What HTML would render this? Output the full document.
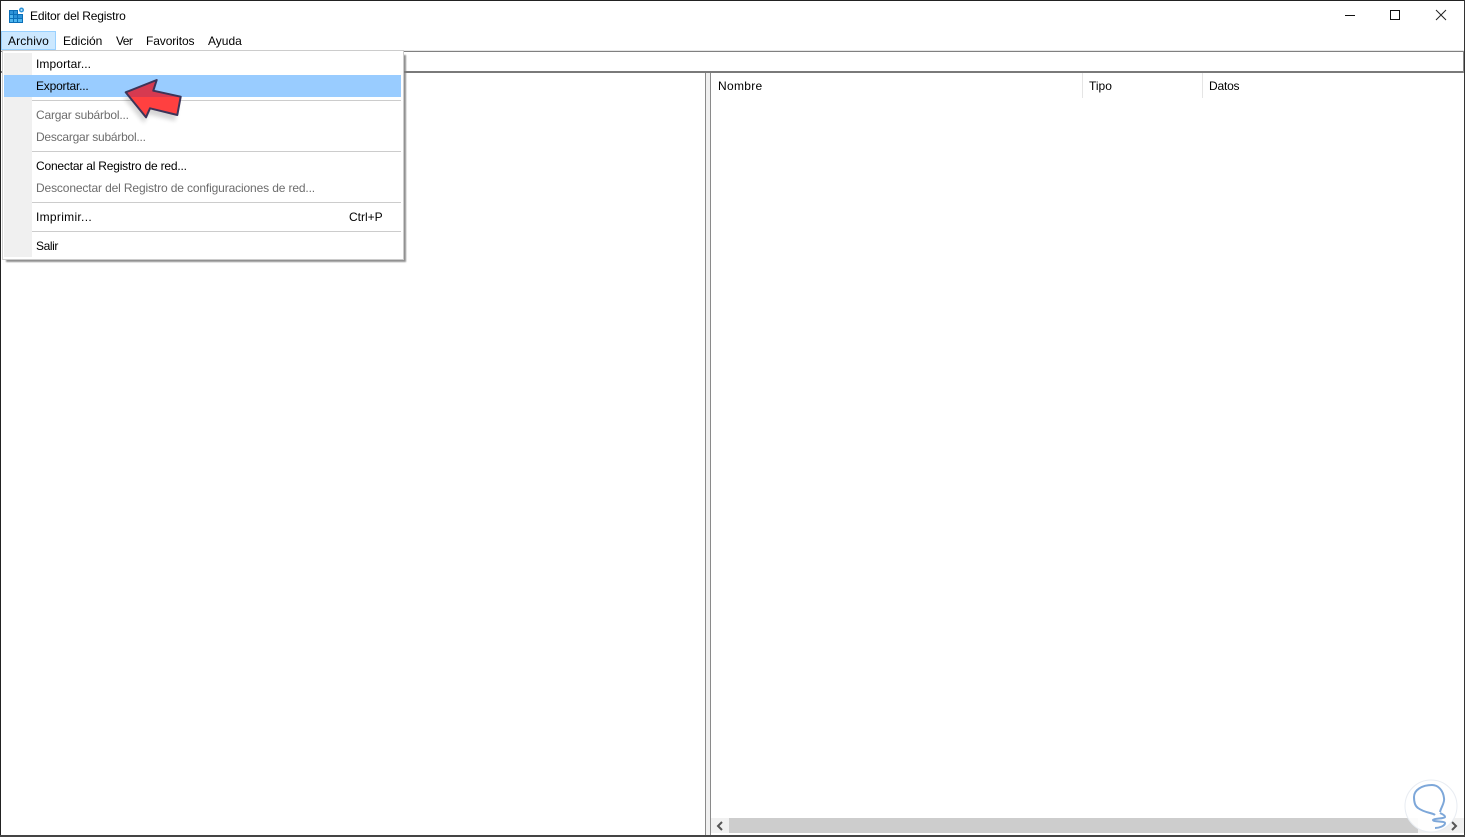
<!DOCTYPE html>
<html><head><meta charset="utf-8"><style>
html,body{margin:0;padding:0;background:#fff;}
#p{position:relative;width:1465px;height:837px;overflow:hidden;background:#fff;font-family:"Liberation Sans",sans-serif;font-size:12px;color:#000;}
.b{position:absolute;}
.t{position:absolute;white-space:nowrap;line-height:16px;height:16px;color:#000;}
.d{color:#6d6d6d;}
</style></head><body><div id="p">
<div class="b" style="left:0;top:0;width:1465px;height:1px;background:#222"></div>
<div class="b" style="left:0;top:0;width:1px;height:837px;background:#222"></div>
<div class="b" style="left:1464px;top:0;width:1px;height:837px;background:#333"></div>
<div class="b" style="left:0;top:835px;width:1465px;height:2px;background:#444"></div>

<svg class="b" style="left:8px;top:7px" width="17" height="17" viewBox="0 0 17 17">
<rect x="1" y="3" width="14" height="13" fill="#0b6fb8"/>
<g fill="#4db5ee"><rect x="2" y="4" width="3" height="3" fill="#2d93d8"/><rect x="6" y="4" width="3" height="3" fill="#2d93d8"/><rect x="2" y="8" width="3" height="3"/><rect x="6" y="8" width="3" height="3" fill="#2d93d8"/><rect x="10" y="8" width="4" height="3" fill="#2d93d8"/><rect x="2" y="12" width="3" height="3"/><rect x="6" y="12" width="3" height="3"/><rect x="10" y="12" width="4" height="3"/></g>
<rect x="10" y="3" width="5" height="4" fill="#fff"/>
<circle cx="13.500" cy="3" r="2.500" fill="#2d93d8"/><circle cx="13.500" cy="3" r="1" fill="#bfe6fa"/>
</svg>
<div class="t" style="left:30px;top:8px;letter-spacing:-.16px">Editor del Registro</div>

<div class="b" style="left:1345px;top:15px;width:10px;height:1px;background:#111"></div>
<div class="b" style="left:1390px;top:10px;width:8px;height:8px;border:1px solid #111"></div>
<svg class="b" style="left:1435px;top:9px" width="12" height="12"><path d="M1 1L11 11M11 1L1 11" stroke="#222" stroke-width="1" fill="none"/></svg>

<div class="b" style="left:1px;top:31px;width:53px;height:17px;background:#cce8ff;border:1px solid #99d1ff"></div>
<div class="t" style="left:8px;top:33px;letter-spacing:.14px">Archivo</div>
<div class="t" style="left:63px;top:33px">Edición</div>
<div class="t" style="left:116px;top:33px;letter-spacing:-.6px">Ver</div>
<div class="t" style="left:146px;top:33px;letter-spacing:-.1px">Favoritos</div>
<div class="t" style="left:208px;top:33px">Ayuda</div>

<div class="b" style="left:1px;top:50px;width:1463px;height:1px;background:#e6e6e6"></div>
<div class="b" style="left:1px;top:51px;width:1463px;height:1px;background:#808080"></div>
<div class="b" style="left:1px;top:71px;width:1463px;height:2px;background:#7a7a7a"></div>
<div class="b" style="left:1463px;top:51px;width:1px;height:22px;background:#8a8a8a"></div>

<div class="b" style="left:705px;top:73px;width:1px;height:762px;background:#8a8a8a"></div>
<div class="b" style="left:706px;top:73px;width:4px;height:762px;background:#f0f0f0"></div>
<div class="b" style="left:710px;top:73px;width:1px;height:762px;background:#8a8a8a"></div>
<div class="t" style="left:718px;top:78px;letter-spacing:.3px">Nombre</div>
<div class="b" style="left:1082px;top:73px;width:1px;height:25px;background:#e5e5e5"></div>
<div class="t" style="left:1089px;top:78px">Tipo</div>
<div class="b" style="left:1202px;top:73px;width:1px;height:25px;background:#e5e5e5"></div>
<div class="t" style="left:1209px;top:78px;letter-spacing:-.2px">Datos</div>

<div class="b" style="left:711px;top:818px;width:753px;height:15px;background:#f0f0f0"></div>
<div class="b" style="left:729px;top:818px;width:689px;height:15px;background:#cdcdcd"></div>
<svg class="b" style="left:716px;top:821px" width="8" height="10"><path d="M6 1L2 5L6 9" stroke="#555" stroke-width="2" fill="none"/></svg>
<svg class="b" style="left:1450px;top:821px" width="8" height="10"><path d="M2 1L6 5L2 9" stroke="#555" stroke-width="2" fill="none"/></svg>

<!-- menu -->
<div class="b" style="left:6px;top:55px;width:400px;height:207px;background:#7c7c7c;opacity:.85;filter:blur(.8px)"></div>
<div class="b" style="left:2px;top:50px;width:400px;height:208px;background:#fff;border:1px solid #ccc"></div>
<div class="b" style="left:4px;top:53px;width:28px;height:204px;background:#f0f0f0"></div>
<div class="b" style="left:4px;top:75px;width:397px;height:22px;background:#99ccff"></div>
<div class="b" style="left:32px;top:100px;width:369px;height:1px;background:#ccc"></div>
<div class="b" style="left:32px;top:151px;width:369px;height:1px;background:#ccc"></div>
<div class="b" style="left:32px;top:202px;width:369px;height:1px;background:#ccc"></div>
<div class="b" style="left:32px;top:231px;width:369px;height:1px;background:#ccc"></div>
<div class="t" style="left:36px;top:56px;letter-spacing:.1px">Importar...</div>
<div class="t" style="left:36px;top:78px;letter-spacing:-.2px">Exportar...</div>
<div class="t d" style="left:36px;top:107px;letter-spacing:-.18px">Cargar subárbol...</div>
<div class="t d" style="left:36px;top:129px;letter-spacing:-.24px">Descargar subárbol...</div>
<div class="t" style="left:36px;top:158px;letter-spacing:-.2px">Conectar al Registro de red...</div>
<div class="t d" style="left:36px;top:180px;letter-spacing:-.135px">Desconectar del Registro de configuraciones de red...</div>
<div class="t" style="left:36px;top:209px;letter-spacing:.3px">Imprimir...</div>
<div class="t" style="left:349px;top:209px">Ctrl+P</div>
<div class="t" style="left:36px;top:238px;letter-spacing:-.4px">Salir</div>

<!-- arrow -->
<svg class="b" style="left:115px;top:72px;overflow:visible" width="80" height="56" viewBox="0 0 80 56">
<defs><clipPath id="c"><rect x="0" y="0" width="80" height="25"/></clipPath><filter id="f" x="-20%" y="-20%" width="140%" height="140%"><feGaussianBlur stdDeviation="2"/></filter></defs>
<path d="M10.700 20.300L41.700 8L38.300 18.700L65.700 24.700L62.300 43L35 36.300L31 45.300Z" fill="#000" opacity=".16" filter="url(#f)" transform="translate(-2,6)"/>
<path d="M10.700 20.300L41.700 8L38.300 18.700L65.700 24.700L62.300 43L35 36.300L31 45.300Z" fill="#ff4040"/>
<path d="M10.700 20.300L41.700 8L38.300 18.700L65.700 24.700L62.300 43L35 36.300L31 45.300Z" fill="#d63a50" clip-path="url(#c)"/>
<path d="M10.700 20.300L41.700 8L38.300 18.700L65.700 24.700L62.300 43L35 36.300L31 45.300Z" fill="none" stroke="#3c3458" stroke-width="2" stroke-linejoin="round"/>
</svg>

<!-- watermark -->
<svg class="b" style="left:1404px;top:780px;overflow:visible" width="56" height="54" viewBox="0 0 56 54">
<circle cx="27" cy="26" r="26" fill="#fff" fill-opacity=".92" stroke="#e8ecf2" stroke-width="1"/>
<path d="M36 32C37 27 41 23 40 18C39 10 34 5 28 5C18 5 10 10 10 17C10 22 11 26 14 28C18 31 22 32 26 33C28 33.500 30 34 31 35" fill="none" stroke="#7da7d9" stroke-width="2"/>
<path d="M36 33C38 34 41 35 41 37C40 39 30 38 29 40C29 42 41 41 41 43C41 46 35 48 31 48" fill="none" stroke="#7da7d9" stroke-width="2"/>
</svg>
</div></body></html>
